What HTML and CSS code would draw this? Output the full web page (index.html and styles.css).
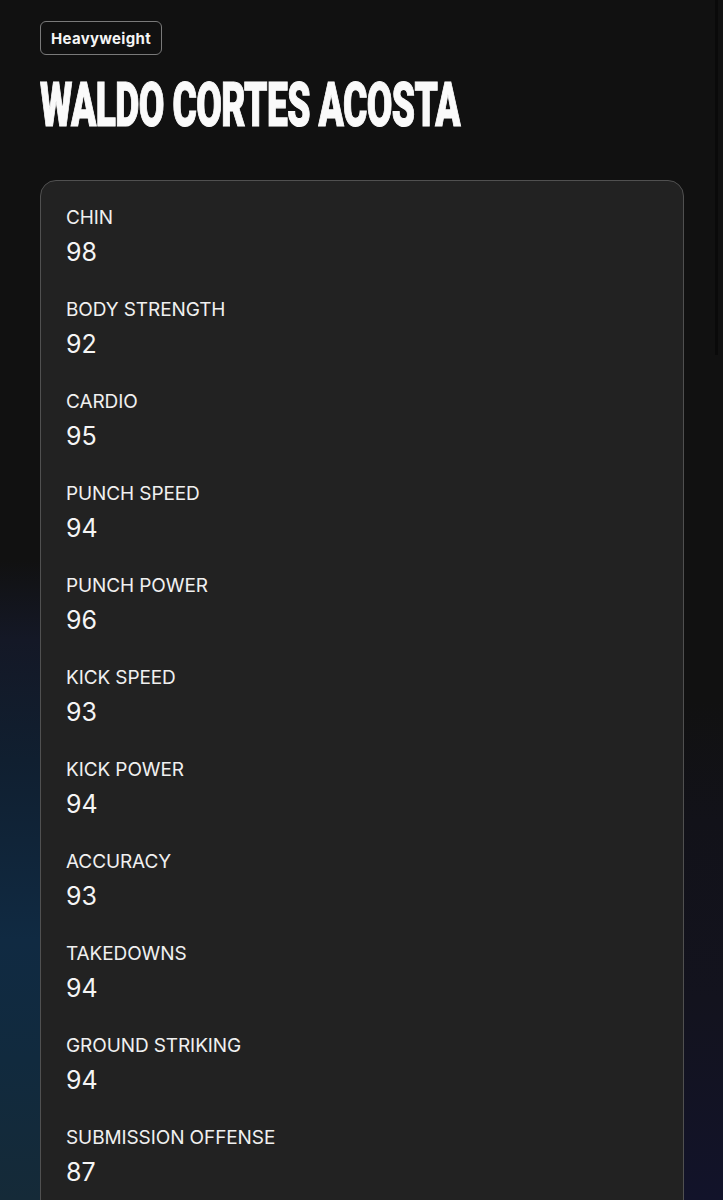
FILE: index.html
```html
<!DOCTYPE html>
<html lang="en">
<head>
<meta charset="utf-8">
<title>Waldo Cortes Acosta</title>
<link rel="stylesheet" href="styles.css">
</head>
<body>
<div class="scroll-thumb"></div>
<main class="page">
  <span class="badge">Heavyweight</span>
  <h1 class="title"><span class="title-inner">WALDO CORTES ACOSTA</span></h1>
  <section class="card">
    <div class="stat"><div class="label">CHIN</div><div class="value">98</div></div>
    <div class="stat"><div class="label">BODY STRENGTH</div><div class="value">92</div></div>
    <div class="stat"><div class="label">CARDIO</div><div class="value">95</div></div>
    <div class="stat"><div class="label">PUNCH SPEED</div><div class="value">94</div></div>
    <div class="stat"><div class="label">PUNCH POWER</div><div class="value">96</div></div>
    <div class="stat"><div class="label">KICK SPEED</div><div class="value">93</div></div>
    <div class="stat"><div class="label">KICK POWER</div><div class="value">94</div></div>
    <div class="stat"><div class="label">ACCURACY</div><div class="value">93</div></div>
    <div class="stat"><div class="label">TAKEDOWNS</div><div class="value">94</div></div>
    <div class="stat"><div class="label">GROUND STRIKING</div><div class="value">94</div></div>
    <div class="stat"><div class="label">SUBMISSION OFFENSE</div><div class="value">87</div></div>
  </section>
</main>
</body>
</html>
```

FILE: styles.css
```css
html, body {
  margin: 0;
  padding: 0;
}
body {
  height: 1200px;
  background-color: #111111;
  background-image:
    linear-gradient(to bottom, #111111 0px, #111111 560px, #141826 640px, #101f30 760px, #102a42 940px, #112a3e 1060px, #152a38 1200px),
    linear-gradient(to bottom, #111111 0px, #111111 700px, #121219 820px, #13131e 1000px, #12132a 1200px);
  background-size: 40px 1200px, 40px 1200px;
  background-position: left top, right top;
  background-repeat: no-repeat;
  color: #f2f2f2;
  font-family: "Inter", "Liberation Sans", sans-serif;
  overflow: hidden;
}
.scroll-thumb {
  position: absolute;
  left: 715px;
  top: 0;
  width: 3px;
  height: 355px;
  background: #0a0a0a;
}
.page {
  padding: 21px 40px 0 40px;
  display: flex;
  flex-direction: column;
  align-items: flex-start;
}
.badge {
  display: inline-flex;
  align-items: center;
  box-sizing: border-box;
  height: 34px;
  padding: 0 10px;
  border: 1px solid #7a7a7a;
  border-radius: 6px;
  font-size: 15px;
  font-weight: 700;
  color: #f5f5f5;
  letter-spacing: 0.3px;
}
.title {
  margin: 21px 0 0 0;
  height: 60px;
  width: 643px;
  font-family: "Roboto", "Liberation Sans", sans-serif;
  font-weight: 900;
  font-size: 62px;
  line-height: 58px;
  color: #fafafa;
  white-space: nowrap;
}
.title-inner {
  display: inline-block;
  transform: scaleX(0.6);
  transform-origin: left center;
  letter-spacing: -1px;
  -webkit-text-stroke: 1.2px #fafafa;
}
.card {
  margin-top: 44px;
  width: 644px;
  box-sizing: border-box;
  border: 1px solid #505050;
  border-radius: 16px;
  background: #222222;
  padding: 24px 25px 40px 25px;
  display: flex;
  flex-direction: column;
}
.stat {
  height: 92px;
}
.label {
  font-size: 19px;
  line-height: 26px;
  color: #f0f0f0;
  letter-spacing: -0.1px;
}
.value {
  margin-top: 6px;
  font-size: 25px;
  line-height: 30px;
  color: #f5f5f5;
}
```
